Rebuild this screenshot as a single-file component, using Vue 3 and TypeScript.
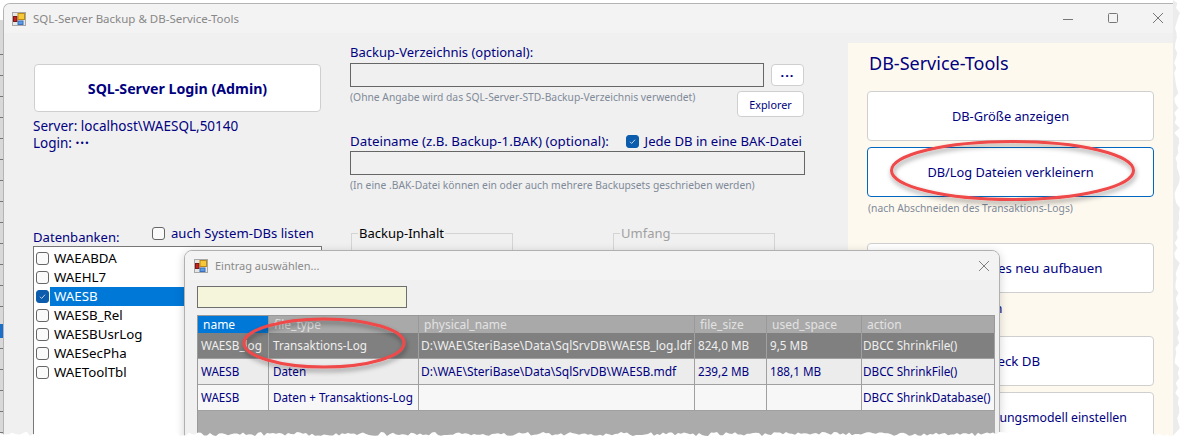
<script setup lang="ts">
const dbs = [
  { name: 'WAEABDA', on: false },
  { name: 'WAEHL7', on: false },
  { name: 'WAESB', on: true },
  { name: 'WAESB_Rel', on: false },
  { name: 'WAESBUsrLog', on: false },
  { name: 'WAESecPha', on: false },
  { name: 'WAEToolTbl', on: false },
]
const columns = ['name', 'file_type', 'physical_name', 'file_size', 'used_space', 'action']
const rows = [
  ['WAESB_log', 'Transaktions-Log', 'D:\\WAE\\SteriBase\\Data\\SqlSrvDB\\WAESB_log.ldf', '824,0 MB', '9,5 MB', 'DBCC ShrinkFile()'],
  ['WAESB', 'Daten', 'D:\\WAE\\SteriBase\\Data\\SqlSrvDB\\WAESB.mdf', '239,2 MB', '188,1 MB', 'DBCC ShrinkFile()'],
  ['WAESB', 'Daten + Transaktions-Log', '', '', '', 'DBCC ShrinkDatabase()'],
]
const jitter = (n: number) => {
  const v = Math.sin(n * 12.9898) * 43758.5453
  return v - Math.floor(v)
}
const tornBottom = (() => {
  const pts: string[] = ['0,438', '0,433']
  for (let x = 3; x <= 1182; x += 3) pts.push(`${x},${(432 + jitter(x) * 4).toFixed(1)}`)
  pts.push('1182,438')
  return pts.join(' ')
})()
const tornRight = (() => {
  const pts: string[] = ['1173,0']
  for (let y = 3; y <= 438; y += 5) pts.push(`${(1174 + jitter(y) * 6).toFixed(1)},${y}`)
  pts.push('1173,438')
  return pts.join(' ')
})()
</script>

<template>
  <div class="page">
    <div class="behind">
      <span v-for="n in 19" :key="n" class="tick"></span>
      <span class="blue-bit"></span>
    </div>

    <div class="window">
      <header class="titlebar">
        <svg class="app-icon" viewBox="0 0 14 14">
          <rect x="0.5" y="0.5" width="13" height="13" fill="#e6e6e6" stroke="#a8a8a8" />
          <rect x="1.5" y="4.5" width="3.5" height="5" fill="#c8201c" stroke="#7a1a18" />
          <rect x="6" y="1.5" width="6.5" height="6" fill="#f7c83a" stroke="#b98a14" />
          <rect x="6" y="9" width="5" height="3.5" fill="#5a9be6" stroke="#3a70b8" />
        </svg>
        <span class="title">SQL-Server Backup &amp; DB-Service-Tools</span>
        <div class="controls">
          <svg viewBox="0 0 10 10"><path d="M0 5.5h10" /></svg>
          <svg viewBox="0 0 10 10"><rect x="0.5" y="0.5" width="9" height="9" rx="1" /></svg>
          <svg viewBox="0 0 10 10"><path d="M0 0l10 10M10 0L0 10" /></svg>
        </div>
      </header>

      <div class="body">
        <section class="left">
          <button class="btn login">SQL-Server Login (Admin)</button>
          <div class="server">Server: localhost\WAESQL,50140</div>
          <div class="server">Login: <span class="dotted">···</span></div>
          <div class="db-head">
            <span class="db-label">Datenbanken:</span>
            <label class="check"><i class="box"></i>auch System-DBs listen</label>
          </div>
          <div class="dblist">
            <div v-for="db in dbs" :key="db.name" class="dbrow">
              <i class="box" :class="{ on: db.on }">
                <svg v-if="db.on" viewBox="0 0 13 13"><path d="M3.5 6.8l2 2 4-4.4" /></svg>
              </i>
              <span class="dbname" :class="{ sel: db.on }">{{ db.name }}</span>
            </div>
          </div>
        </section>

        <section class="mid">
          <div class="label first">Backup-Verzeichnis (optional):</div>
          <div class="inline">
            <div class="field short"></div>
            <button class="btn dots">···</button>
          </div>
          <div class="hint-row">
            <span class="hint">(Ohne Angabe wird das SQL-Server-STD-Backup-Verzeichnis verwendet)</span>
            <button class="btn explorer">Explorer</button>
          </div>
          <div class="label-row">
            <span class="label">Dateiname (z.B. Backup-1.BAK) (optional):</span>
            <label class="check"><i class="box on"><svg viewBox="0 0 13 13"><path d="M3.5 6.8l2 2 4-4.4" /></svg></i>Jede DB in eine BAK-Datei</label>
          </div>
          <div class="field"></div>
          <div class="hint second">(In eine .BAK-Datei können ein oder auch mehrere Backupsets geschrieben werden)</div>
          <div class="groups">
            <fieldset class="group"><legend>Backup-Inhalt</legend></fieldset>
            <fieldset class="group off"><legend>Umfang</legend></fieldset>
          </div>
        </section>

        <aside class="tools">
          <h2>DB-Service-Tools</h2>
          <button class="btn tool">DB-Größe anzeigen</button>
          <button class="btn tool focus">DB/Log Dateien verkleinern</button>
          <div class="hint tool-hint">(nach Abschneiden des Transaktions-Logs)</div>
          <button class="btn tool t3">Alle DB-Indizes neu aufbauen</button>
          <div class="tool-hint dark">Indizes reorganisieren</div>
          <button class="btn tool t4">Check DB</button>
          <button class="btn tool t5">DB-Wiederherstellungsmodell einstellen</button>
        </aside>
      </div>
    </div>

    <div class="dialog">
      <header class="dlg-title">
        <svg class="app-icon" viewBox="0 0 14 14">
          <rect x="0.5" y="0.5" width="13" height="13" fill="#e6e6e6" stroke="#a8a8a8" />
          <rect x="1.5" y="4.5" width="3.5" height="5" fill="#c8201c" stroke="#7a1a18" />
          <rect x="6" y="1.5" width="6.5" height="6" fill="#f7c83a" stroke="#b98a14" />
          <rect x="6" y="9" width="5" height="3.5" fill="#5a9be6" stroke="#3a70b8" />
        </svg>
        <span class="dlg-text">Eintrag auswählen...</span>
        <svg class="dlg-close" viewBox="0 0 10 10"><path d="M0 0l10 10M10 0L0 10" /></svg>
      </header>
      <div class="dlg-body">
        <div class="filter"></div>
        <div class="grid">
          <div class="grow head">
            <div v-for="(c, i) in columns" :key="c" class="cell" :class="{ active: i === 0 }">{{ c }}</div>
          </div>
          <div v-for="(r, ri) in rows" :key="ri" class="grow" :class="'r' + ri">
            <div v-for="(v, ci) in r" :key="ci" class="cell" :class="'c' + ci">{{ v }}</div>
          </div>
        </div>
      </div>
    </div>

    <svg class="marks" viewBox="0 0 1182 438">
      <defs>
        <filter id="sh" x="-10%" y="-20%" width="120%" height="150%">
          <feDropShadow dx="1" dy="3" stdDeviation="2.5" flood-color="#000" flood-opacity="0.4" />
        </filter>
      </defs>
      <ellipse cx="1012.5" cy="170.5" rx="121" ry="29" filter="url(#sh)" />
      <ellipse cx="324" cy="343" rx="80" ry="24" filter="url(#sh)" />
    </svg>

    <svg class="torn" viewBox="0 0 1182 438">
      <polygon class="edge" :points="tornRight" />
      <polygon :points="tornBottom" />
    </svg>
  </div>
</template>

<style>
html, body { margin: 0; background: #fff; }
</style>

<style scoped>
.page {
  position: relative;
  width: 1182px;
  height: 438px;
  overflow: hidden;
  background: #fff;
  font-family: "Noto Sans", "Open Sans", sans-serif;
  color: #000080;
  font-size: 13.5px;
}
.behind {
  position: absolute;
  left: 0;
  top: 20px;
  width: 3px;
  height: 418px;
  background: #d8d8d8;
  display: flex;
  flex-direction: column;
  padding-top: 34px;
  gap: 20px;
  box-sizing: border-box;
}
.tick { display: block; height: 1px; background: #777; flex: none; }
.blue-bit { position: absolute; left: 0; top: 304px; width: 3px; height: 14px; background: #1a6fc8; }

.window {
  position: absolute;
  left: 3px;
  top: 3px;
  width: 1170px;
  height: 440px;
  box-sizing: border-box;
  border: 1px solid #b4b4b4;
  border-right: 0;
  border-radius: 7px 0 0 0;
  background: #f0f0f0;
  overflow: hidden;
}
.titlebar {
  height: 29px;
  background: #f3f3f3;
  display: flex;
  align-items: center;
  padding-left: 8px;
}
.app-icon { width: 14px; height: 14px; flex: none; }
.title { margin-left: 7px; color: #888; font-size: 11.5px; }
.controls { margin-left: auto; display: flex; gap: 35px; padding-right: 10px; }
.controls svg { width: 10px; height: 10px; fill: none; stroke: #777; stroke-width: 1; }
.controls svg:first-child { margin-top: 1px; }

.body { display: flex; height: 406px; }
.btn {
  display: block;
  box-sizing: border-box;
  background: #fff;
  border: 1px solid #cfcfcf;
  border-radius: 4px;
  font-family: inherit;
  color: #000080;
  padding: 0;
  font-size: 12.8px;
}

.left { width: 317px; margin-left: 29px; flex: none; display: flex; flex-direction: column; }
.login {
  margin: 31px 0 6px 1px;
  width: 287px;
  height: 50px;
  font-weight: 700;
  font-size: 14.2px;
}
.server { height: 17px; line-height: 17px; }
.dotted { letter-spacing: 1px; font-weight: 700; }
.db-head { display: flex; align-items: flex-start; margin-top: 74px; height: 20px; font-size: 13.1px; }
.db-label { margin-top: 2px; width: 119px; }
.check { display: flex; align-items: center; gap: 6px; color: #000080; line-height: 14px; white-space: nowrap; font-size: 13.1px; }
.box {
  display: block;
  flex: none;
  width: 13px;
  height: 13px;
  box-sizing: border-box;
  border: 1px solid #666;
  border-radius: 3px;
  background: #fafafa;
}
.box.on { background: #0b5cad; border-color: #0b5cad; }
.box svg { display: block; width: 11px; height: 11px; fill: none; stroke: #dfeaf7; stroke-width: 1; }
.dblist {
  width: 289px;
  height: 200px;
  box-sizing: border-box;
  border: 1px solid #777;
  background: #fff;
  padding: 2px 0 0 2px;
  font-size: 13.3px;
}
.dbrow { display: flex; align-items: center; height: 19px; gap: 1px; }
.dbname {
  flex: 1;
  height: 19px;
  line-height: 19px;
  color: #000;
  padding-left: 4px;
}
.dbname.sel { background: #0078d7; color: #fff; }

.mid { width: 455px; flex: none; display: flex; flex-direction: column; }
.label { color: #000080; line-height: 18px; white-space: nowrap; font-size: 13.3px; }
.first { margin-top: 10px; height: 20px; font-size: 13px; }
.inline { display: flex; justify-content: space-between; align-items: center; height: 24px; }
.field { height: 24px; box-sizing: border-box; border: 1px solid #666; background: #f0f0f0; flex: none; }
.short { width: 414px; }
.dots { width: 33px; height: 22px; line-height: 16px; letter-spacing: 1px; margin-right: 1px; font-weight: 700; }
.hint-row { display: flex; justify-content: space-between; align-items: flex-start; height: 40px; margin-top: 4px; }
.hint-row .hint { margin-top: -1px; }
.hint { color: #7f8a99; font-size: 10.3px; line-height: 14px; white-space: nowrap; }
.explorer { width: 67px; height: 26px; font-size: 10.8px; margin-right: 1px; }
.label-row { display: flex; justify-content: space-between; align-items: center; height: 20px; }
.label-row .check { margin-right: 3px; }
.second { margin-top: 3px; }
.groups { display: flex; margin-top: 33px; gap: 100px; padding-left: 1px; }
.group {
  margin: 0;
  padding: 0;
  width: 162px;
  height: 40px;
  box-sizing: border-box;
  border: 1px solid #d4d4d4;
  border-width: 1px 1px 0 1px;
}
.group legend { color: #000; margin-left: 6px; padding: 0 1px; line-height: 16px; font-size: 13px; }
.group.off legend { color: #a0a0a0; }

.tools {
  margin-left: 43px;
  width: 325px;
  margin-top: 10px;
  background: #fef9ef;
  padding-left: 19px;
  box-sizing: border-box;
  flex: none;
}
.tools h2 {
  margin: 0;
  font-size: 18px;
  font-weight: 400;
  color: #000080;
  line-height: 22px;
  padding: 9px 0 0 2px;
  height: 48px;
  box-sizing: border-box;
}
.tool { width: 287px; height: 50px; margin-bottom: 6px; }
.tool.focus { border-color: #0067c0; margin-bottom: 4px; }
.tool-hint { padding-left: 1px; }
.tool-hint.dark { color: #000080; font-size: 12.8px; line-height: 20px; margin-top: 5px; }
.t3 { margin-top: 28px; margin-bottom: 5px; font-size: 13.3px; }
.t4 { margin-top: 18px; font-size: 13.3px; }
.t5 { margin-bottom: 0; font-size: 12.3px; }

.dialog {
  position: absolute;
  left: 184px;
  top: 250px;
  width: 816px;
  height: 200px;
  box-sizing: border-box;
  border: 1px solid #b0b0b0;
  border-radius: 8px 8px 0 0;
  background: #f0f0f0;
  box-shadow: 0 2px 10px rgba(0, 0, 0, 0.18);
  overflow: hidden;
}
.dlg-title { height: 29px; background: #f3f3f3; display: flex; align-items: center; padding-left: 9px; }
.dlg-text { margin-left: 7px; color: #8a8a8a; font-size: 11px; }
.dlg-close { width: 10px; height: 10px; margin-left: auto; margin-right: 10px; fill: none; stroke: #808080; stroke-width: 1; }
.dlg-body { padding: 6px 0 0 12px; }
.filter { width: 210px; height: 22px; box-sizing: border-box; border: 1px solid #6e6e6e; background: #f5f5dc; }
.grid { margin-top: 7px; width: 798px; height: 130px; background: #ababab; border-top: 1px solid #999; border-left: 1px solid #999; box-sizing: border-box; }
.grow {
  display: grid;
  grid-template-columns: 71px 150px 276px 72px 95px 133px;
  height: 26px;
  box-sizing: border-box;
  border-bottom: 1px solid #a0a0a0;
}
.grow.head { height: 17px; border-bottom: 0; color: #e4e4e4; }
.cell {
  box-sizing: border-box;
  border-right: 1px solid #a0a0a0;
  padding-left: 3px;
  font-size: 11.7px;
  line-height: 25px;
  white-space: nowrap;
  overflow: hidden;
}
.head .cell { line-height: 17px; padding-left: 5px; font-size: 12px; background: #a9a9a9; color: #e2e2e2; border-right-color: #999; }
.head .cell.active { background: #0078d7; color: #fff; }
.r0 .cell { background: #808080; color: #efefef; }
.r1 .cell { background: #ececec; color: #000080; }
.r2 .cell { background: #f7f7f7; color: #000080; }
.c1 { padding-left: 4px; }
.grow .c2 { padding-left: 2px; font-size: 12px; }
.grow .c5 { padding-left: 1px; }

.marks { position: absolute; left: 0; top: 0; width: 1182px; height: 438px; pointer-events: none; }
.marks ellipse { fill: none; stroke: #f04848; stroke-width: 3; }
.torn { position: absolute; left: 0; top: 0; width: 1182px; height: 438px; pointer-events: none; }
.torn polygon { fill: #fff; }
.torn polygon.edge { fill: #ececec; }
</style>
